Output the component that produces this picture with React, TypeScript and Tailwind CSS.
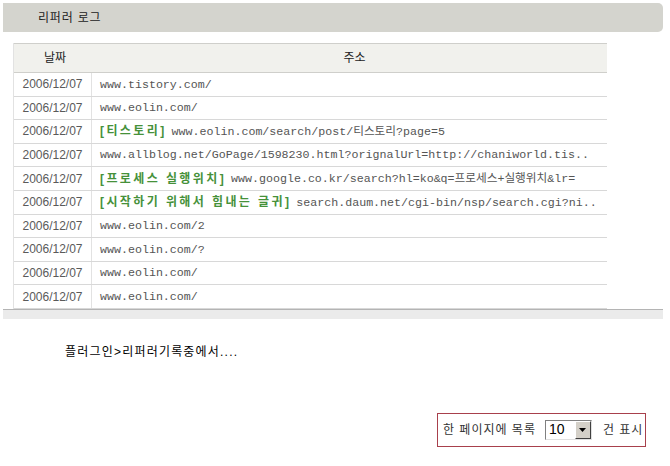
const rows: { tag?: string; url: string }[] = [
  { url: 'www.tistory.com/' },
  { url: 'www.eolin.com/' },
  { tag: '[티스토리]', url: 'www.eolin.com/search/post/티스토리?page=5' },
  { url: 'www.allblog.net/GoPage/1598230.html?orignalUrl=http://chaniworld.tis..' },
  { tag: '[프로세스 실행위치]', url: 'www.google.co.kr/search?hl=ko&q=프로세스+실행위치&lr=' },
  { tag: '[시작하기 위해서 힘내는 글귀]', url: 'search.daum.net/cgi-bin/nsp/search.cgi?ni..' },
  { url: 'www.eolin.com/2' },
  { url: 'www.eolin.com/?' },
  { url: 'www.eolin.com/' },
  { url: 'www.eolin.com/' },
]

const ko = "font-['Liberation_Sans','Noto_Sans_CJK_KR',sans-serif]"
const mono = "font-['Liberation_Mono','Noto_Sans_CJK_KR',monospace]"

export default function App() {
  return (
    <div className={`w-[670px] h-[466px] bg-white flex flex-col ${ko}`}>
      <div className="mt-[3px] ml-[3px] w-[660px] h-[29px] bg-[#d4d4ce] rounded-r-[5px] flex items-center pl-[35px] text-[12px] text-[#222] tracking-[0.8px]">
        리퍼러 로그
      </div>

      <div className="ml-[13px] mt-[11px] w-[594px] border-l border-[#e2e2e2]">
        <div className="flex h-[30px] bg-[#f1f1ed] border-t border-b border-[#cfcfcb] text-[12px] text-[#222]">
          <div className="w-[78px] flex items-center justify-center pl-[4px]">날짜</div>
          <div className="flex-1 flex items-center justify-center pl-[10px]">주소</div>
        </div>
        {rows.map((r, i) => (
          <div key={i} className="flex h-[23.6px] border-b border-[#d8d8d8]">
            <div className="w-[78px] flex items-center justify-center text-[12px] text-[#5a5a5a] border-r border-[#e2e2e2]">
              2006/12/07
            </div>
            <div className="flex-1 flex items-center pl-[8px] text-[#555] whitespace-nowrap">
              {r.tag && (
                <span className="text-[12px] font-bold text-[#46913a] tracking-[2.4px] mr-[5px]">{r.tag}</span>
              )}
              <span className={`${mono} text-[11.65px]`}>{r.url}</span>
            </div>
          </div>
        ))}
      </div>

      <div className="ml-[3px] w-[660px] h-[10px] border-t border-[#b4b4b4] bg-[#ebebeb]" />

      <div className="pl-[65px] mt-[24px] text-[12px] text-black tracking-[1.2px]">플러그인&gt;리퍼러기록중에서....</div>

      <div className="flex justify-end pr-[24px] mt-[52px]">
        <div className="w-[209px] h-[34px] border border-[#a8404c] flex items-center pl-[5px] text-[12px] text-[#333]">
          <span className="tracking-[1px]">한 페이지에 목록</span>
          <div className="ml-[9px] w-[47px] h-[20px] flex border border-t-[#808080] border-l-[#808080] border-r-[#e0e0e0] border-b-[#e0e0e0] bg-white">
            <span className="flex-1 flex items-center pl-[3px] text-[14px] text-black">10</span>
            <span className="w-[16px] bg-[#d4d0c8] border border-t-white border-l-white border-r-[#404040] border-b-[#404040] flex items-center justify-center">
              <svg width="7" height="4" viewBox="0 0 7 4"><path d="M0 0h7L3.5 4z" fill="#000" /></svg>
            </span>
          </div>
          <span className="ml-[11px] tracking-[1px]">건 표시</span>
        </div>
      </div>
    </div>
  )
}
